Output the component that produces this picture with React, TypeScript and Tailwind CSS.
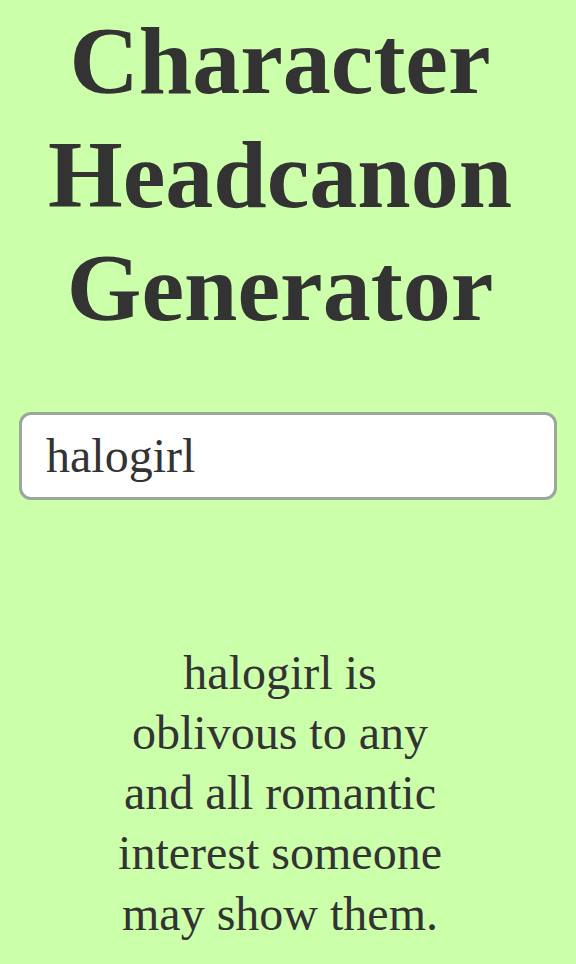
import React, { useState } from "react";

export default function App() {
  const [name, setName] = useState("halogirl");
  return (
    <div
      className="min-h-[964px] w-full bg-[#ccffaa] text-[#333333] overflow-hidden"
      style={{ fontFamily: '"Liberation Serif", "Times New Roman", serif' }}
    >
      <h1 className="pt-[4px] pr-[16px] text-center text-[96px] font-bold leading-[113.5px] m-0">
        Character
        <br />
        Headcanon
        <br />
        Generator
      </h1>
      <div className="px-[19px] mt-[67px]">
        <input
          value={name}
          onChange={(e) => setName(e.target.value)}
          className="block w-full h-[88px] rounded-[12px] border-[3px] border-[#9ea69c] bg-white pl-[24px] text-[48px] text-[#333333] outline-none"
          style={{ fontFamily: '"Liberation Serif", "Times New Roman", serif' }}
        />
      </div>
      <div className="pr-[16px]">
        <p className="mx-auto mt-[143px] w-[340px] text-center text-[48px] leading-[60.3px]">
          {`${name} is oblivous to any and all romantic interest someone may show them.`}
        </p>
      </div>
    </div>
  );
}
